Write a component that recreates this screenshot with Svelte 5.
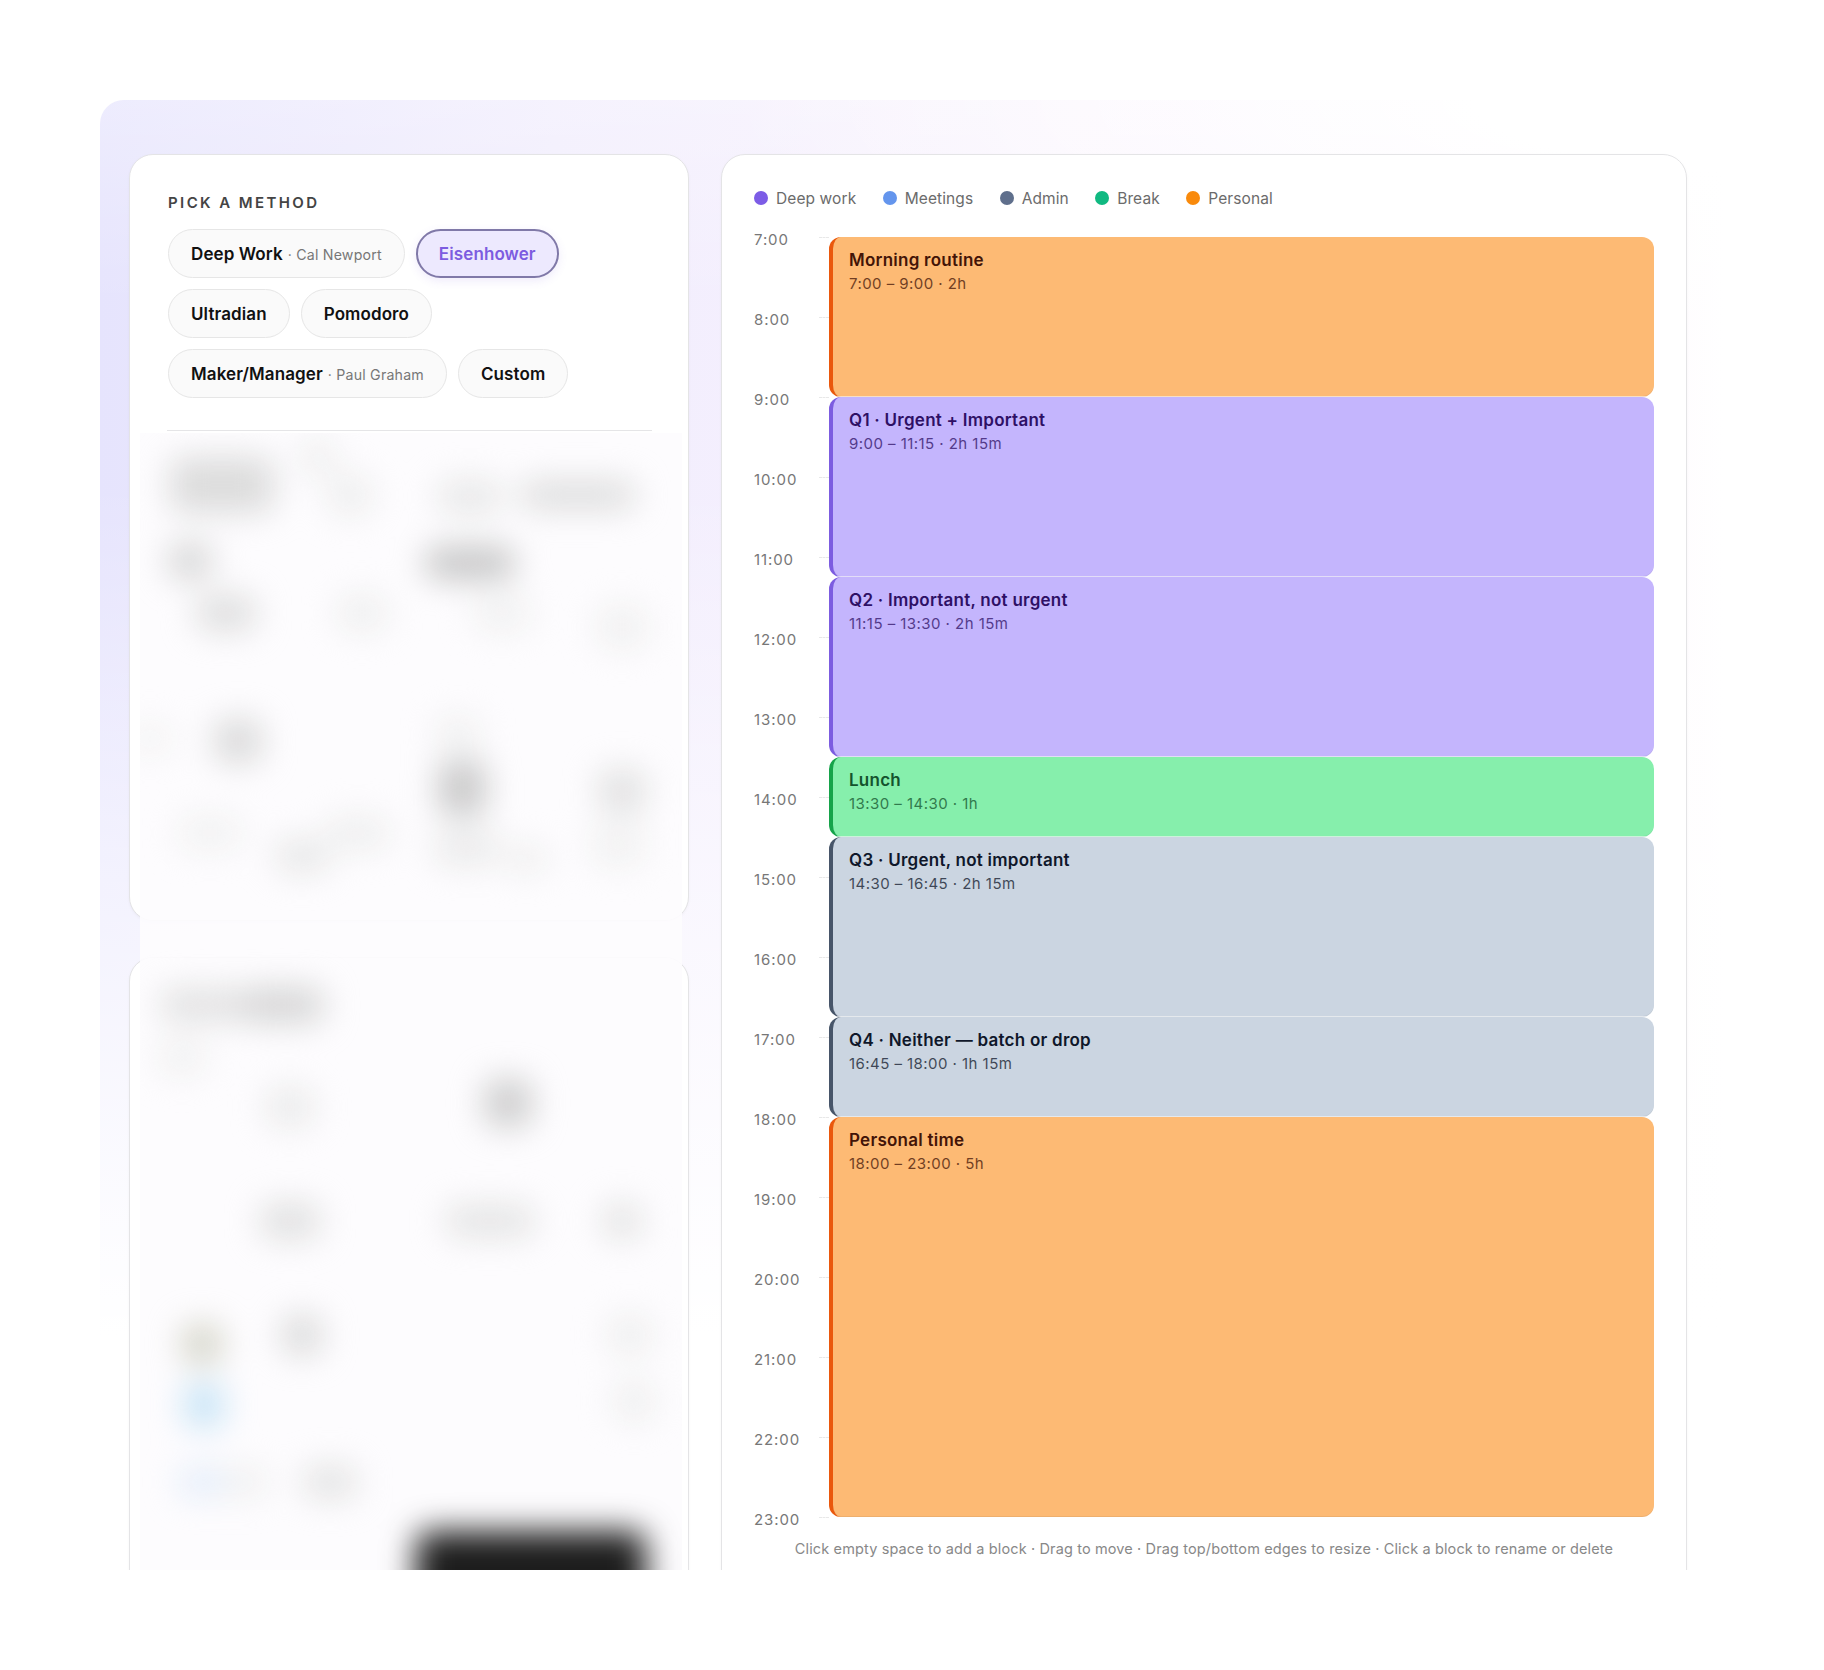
<script>
  const methods = [
    { name: 'Deep Work', by: 'Cal Newport' },
    { name: 'Eisenhower', active: true },
    { name: 'Ultradian' },
    { name: 'Pomodoro' },
    { name: 'Maker/Manager', by: 'Paul Graham' },
    { name: 'Custom' }
  ];

  const legend = [
    { label: 'Deep work', color: '#7c5ce6' },
    { label: 'Meetings', color: '#6495ed' },
    { label: 'Admin', color: '#5f6f8c' },
    { label: 'Break', color: '#10b981' },
    { label: 'Personal', color: '#f98a0c' }
  ];

  const hours = Array.from({ length: 17 }, (_, i) => `${i + 7}:00`);

  // start and end in hours, 80px per hour
  const blocks = [
    { title: 'Morning routine', time: '7:00 – 9:00 · 2h', start: 7, end: 9, kind: 'personal' },
    { title: 'Q1 · Urgent + Important', time: '9:00 – 11:15 · 2h 15m', start: 9, end: 11.25, kind: 'deep' },
    { title: 'Q2 · Important, not urgent', time: '11:15 – 13:30 · 2h 15m', start: 11.25, end: 13.5, kind: 'deep' },
    { title: 'Lunch', time: '13:30 – 14:30 · 1h', start: 13.5, end: 14.5, kind: 'break' },
    { title: 'Q3 · Urgent, not important', time: '14:30 – 16:45 · 2h 15m', start: 14.5, end: 16.75, kind: 'admin' },
    { title: 'Q4 · Neither — batch or drop', time: '16:45 – 18:00 · 1h 15m', start: 16.75, end: 18, kind: 'admin' },
    { title: 'Personal time', time: '18:00 – 23:00 · 5h', start: 18, end: 23, kind: 'personal' }
  ];

  // smudges of the blurred-out form, centre x/y relative to the overlay
  const smudges = [
    [82, 52, 104, 56, '#dcdcdc'], [178, 24, 34, 36, '#eeeeee'], [210, 62, 44, 40, '#eeeeee'],
    [330, 64, 64, 34, '#e8e8e8'], [438, 62, 116, 28, '#dcdcdc'], [50, 128, 44, 36, '#d6d6d6'],
    [330, 130, 90, 32, '#c4c4c4'], [86, 180, 60, 36, '#dedede'], [222, 180, 50, 36, '#efefef'],
    [362, 180, 56, 36, '#f1f1f1'], [482, 194, 50, 44, '#f1f1f1'], [98, 308, 48, 44, '#dadada'],
    [10, 306, 50, 30, '#f4f4f4'], [322, 355, 48, 56, '#cacaca'], [318, 300, 44, 34, '#f0f0f0'],
    [482, 358, 48, 44, '#e2e2e2'], [70, 400, 64, 34, '#f2f2f2'], [162, 423, 54, 34, '#e8e8e8'],
    [218, 400, 64, 34, '#efefef'], [326, 415, 64, 36, '#ebebeb'], [386, 426, 44, 28, '#efefef'],
    [478, 412, 54, 44, '#f2f2f2'], [62, 572, 84, 34, '#e2e2e2'], [142, 572, 84, 36, '#d6d6d6'],
    [42, 625, 48, 34, '#f1f1f1'], [150, 674, 48, 40, '#ebebeb'], [368, 670, 48, 48, '#cecece'],
    [150, 788, 60, 36, '#e0e0e0'], [350, 788, 90, 32, '#e4e4e4'], [482, 788, 40, 36, '#e4e4e4'],
    [62, 911, 40, 40, '#d4d4c8'], [162, 902, 40, 40, '#dadada'], [490, 902, 44, 40, '#efefef'],
    [64, 972, 40, 46, '#c8e4f6'], [494, 968, 40, 40, '#efefef'], [62, 1049, 48, 30, '#e4edfa'],
    [106, 1049, 44, 30, '#f0f0f0'], [190, 1049, 54, 34, '#e4e4e4']
  ];
</script>

<div class="page">
  <div class="panel">
    <div class="left">
      <section class="card methods">
        <h3>PICK A METHOD</h3>
        <div class="pills">
          {#each methods as m}
            <button class="pill" class:active={m.active}>
              {m.name}{#if m.by}<span class="by">· {m.by}</span>{/if}
            </button>
          {/each}
        </div>
      </section>
      <section class="card lower"></section>

      <!-- blurred out part of the left column -->
      <div class="veil" aria-hidden="true">
        <div class="smudges">
          {#each smudges as [x, y, w, h, color]}
            <i style="left:{x - w / 2}px;top:{y - h / 2}px;width:{w}px;height:{h}px;background:{color}"></i>
          {/each}
          <i class="black"></i>
        </div>
      </div>
    </div>

    <section class="card schedule">
      <div class="legend">
        {#each legend as item}
          <span class="key"><b style="background:{item.color}"></b>{item.label}</span>
        {/each}
      </div>

      <div class="timeline">
        <div class="hours">
          {#each hours as h}
            <div class="hour"><span>{h}</span></div>
          {/each}
        </div>
        <div class="blocks">
          {#each blocks as b}
            <div class="block {b.kind}" style="height:{(b.end - b.start) * 80}px">
              <div class="title">{b.title}</div>
              <div class="time">{b.time}</div>
            </div>
          {/each}
        </div>
      </div>

      <p class="hint">Click empty space to add a block · Drag to move · Drag top/bottom edges to resize · Click a block to rename or delete</p>
    </section>
  </div>
</div>

<style>
  :global(body) {
    margin: 0;
    background: #fff;
  }

  .page {
    height: 1670px;
    padding: 100px 100px 0;
    box-sizing: border-box;
    font-family: Inter, 'Liberation Sans', sans-serif;
  }

  .panel {
    display: flex;
    gap: 32px;
    height: 1470px;
    overflow: hidden;
    box-sizing: border-box;
    padding: 54px 37px 0 29px;
    border-radius: 24px 24px 0 0;
    background:
      linear-gradient(180deg, rgba(255, 255, 255, 0.3) 0, rgba(255, 255, 255, 0) 14%, rgba(255, 255, 255, 0) 26%, rgba(255, 255, 255, 0.5) 52%, #fff 84%),
      radial-gradient(ellipse 1000px 260px at 100% 0, #fff 25%, rgba(255, 255, 255, 0) 100%),
      linear-gradient(90deg, #e6e4fd 0, #f1edfd 28%, #f9f2fe 60%, #fcf3fd 88%, #fff 100%);
  }

  .left {
    position: relative;
    display: flex;
    flex-direction: column;
    gap: 36px;
    width: 560px;
    flex: none;
  }

  .card {
    box-sizing: border-box;
    flex: none;
    background: #fff;
    border: 1px solid #e4e4e6;
    border-radius: 24px;
    box-shadow: 0 1px 3px rgba(0, 0, 0, 0.04);
  }

  .methods {
    height: 767px;
    padding: 39px 36px 0 37px;
  }

  .lower {
    height: 700px;
  }

  h3 {
    margin: 0 0 17px 1px;
    font-size: 15px;
    line-height: 18px;
    font-weight: 600;
    letter-spacing: 2.4px;
    color: #444;
  }

  .pills {
    display: flex;
    flex-wrap: wrap;
    gap: 11px;
    padding: 0 0 32px 1px;
    border-bottom: 1px solid #e5e5e7;
  }

  .pill {
    height: 49px;
    padding: 0 22px;
    border: 1px solid #e6e6e6;
    border-radius: 25px;
    background: #fafafa;
    font-family: inherit;
    font-size: 17px;
    font-weight: 600;
    letter-spacing: 0.1px;
    color: #111;
    white-space: nowrap;
  }

  .pill.active {
    border: 2px solid #8079a8;
    padding: 0 21px;
    background: #ede9fe;
    color: #7c5ce0;
    box-shadow: 0 3px 10px rgba(124, 92, 224, 0.12);
  }

  .by {
    margin-left: 5px;
    font-size: 14.2px;
    font-weight: 400;
    letter-spacing: 0.2px;
    color: #777;
  }

  .veil {
    position: absolute;
    left: 11px;
    right: 7px;
    top: 279px;
    bottom: 0;
    overflow: hidden;
    background: rgba(253, 252, 254, 0.92);
  }

  .smudges {
    position: absolute;
    inset: 0;
    filter: blur(16px);
  }

  .smudges i {
    position: absolute;
    border-radius: 14px;
  }

  .smudges i.black {
    left: 276px;
    top: 1098px;
    width: 230px;
    height: 80px;
    background: #1c1c1c;
  }

  .schedule {
    width: 966px;
    height: 1500px;
    padding: 0 32px;
  }

  .legend {
    display: flex;
    gap: 26.4px;
    height: 82px;
    padding-top: 32px;
    box-sizing: border-box;
  }

  .key {
    display: flex;
    align-items: center;
    gap: 8px;
    height: 22px;
    font-size: 15.5px;
    letter-spacing: 0.1px;
    color: #6b6b6b;
  }

  .key b {
    width: 14px;
    height: 14px;
    border-radius: 50%;
  }

  .timeline {
    display: flex;
  }

  .hours {
    flex: none;
    width: 75px;
  }

  .hour {
    position: relative;
    height: 80px;
    font-size: 15px;
    letter-spacing: 0.9px;
    color: #777;
  }

  .hour:last-child {
    height: 0;
  }

  .hour span {
    display: block;
    line-height: 20px;
    transform: translateY(-7px);
  }

  .hour::after {
    content: '';
    position: absolute;
    right: 0;
    top: 0;
    width: 10px;
    border-top: 1px dashed #e8e8e8;
  }

  .blocks {
    flex: 1;
  }

  .block {
    box-sizing: border-box;
    padding: 12px 16px;
    border-left: 4px solid;
    border-radius: 12px;
    box-shadow: inset 0 -1px 0 rgba(0, 0, 0, 0.06), 0 0 0 1px rgba(255, 255, 255, 0.6);
  }

  .title {
    font-size: 17px;
    line-height: 22px;
    font-weight: 600;
    letter-spacing: 0.25px;
  }

  .time {
    margin-top: 3px;
    font-size: 15px;
    line-height: 20px;
    letter-spacing: 0.45px;
    opacity: 0.75;
  }

  .personal {
    background: #fdba74;
    border-color: #ea580c;
    color: #431407;
  }

  .deep {
    background: #c4b5fd;
    border-color: #7c5ce0;
    color: #2e1065;
  }

  .break {
    background: #86efac;
    border-color: #16a34a;
    color: #14532d;
  }

  .admin {
    background: #cbd5e1;
    border-color: #475569;
    color: #0f172a;
  }

  .hint {
    margin: 22px 0 0;
    text-align: center;
    font-size: 14.5px;
    line-height: 20px;
    letter-spacing: 0.13px;
    color: #888;
  }
</style>
